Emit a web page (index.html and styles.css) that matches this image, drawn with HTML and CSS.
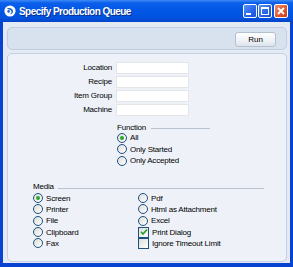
FILE: index.html
```html
<!DOCTYPE html>
<html>
<head>
  <title>Specify Production Queue</title>
  <link rel="stylesheet" href="styles.css">
</head>
<body>
  <div class="window">
    <div class="titlebar">
      <svg class="app-icon" width="12" height="12" viewBox="0 0 12 12">
        <circle cx="6" cy="6" r="5.6" fill="#fff"/>
        <path d="M3 3.5 C5 2.5 8.5 3 9 6 C9.3 8 7.5 9.5 5.5 9.2 C7.5 8.5 8 6.8 7 5.6 C6 4.5 4.5 4.6 3 3.5 Z" fill="#1f5fd0"/>
        <circle cx="4.6" cy="6.4" r="1.3" fill="#1f5fd0"/>
      </svg>
      <span class="title">Specify Production Queue</span>
      <div class="caption-buttons">
        <span class="cbtn"><svg width="14" height="14" viewBox="0 0 14 14"><rect x="3" y="9" width="5" height="2" fill="#fff"/></svg></span>
        <span class="cbtn"><svg width="14" height="14" viewBox="0 0 14 14"><rect x="3.5" y="3.5" width="7" height="7" fill="none" stroke="#fff"/><rect x="3" y="3" width="8" height="2" fill="#fff"/></svg></span>
        <span class="cbtn close"><svg width="14" height="14" viewBox="0 0 14 14"><path d="M4 4 L10 10 M10 4 L4 10" stroke="#fff" stroke-width="1.8"/></svg></span>
      </div>
    </div>

    <div class="client">
      <div class="toolbar">
        <button class="run">Run</button>
      </div>

      <div class="panel">
        <div class="fields">
          <label>Location</label><span class="input"></span>
          <label>Recipe</label><span class="input"></span>
          <label>Item Group</label><span class="input"></span>
          <label>Machine</label><span class="input"></span>
        </div>

        <div class="group function">
          <div class="group-title"><span>Function</span><span class="rule"></span></div>
          <div class="opt"><span class="radio on"></span>All</div>
          <div class="opt"><span class="radio"></span>Only Started</div>
          <div class="opt"><span class="radio"></span>Only Accepted</div>
        </div>

        <div class="group media">
          <div class="group-title"><span>Media</span><span class="rule"></span></div>
          <div class="cols">
            <div class="col">
              <div class="opt"><span class="radio on"></span>Screen</div>
              <div class="opt"><span class="radio"></span>Printer</div>
              <div class="opt"><span class="radio"></span>File</div>
              <div class="opt"><span class="radio"></span>Clipboard</div>
              <div class="opt"><span class="radio"></span>Fax</div>
            </div>
            <div class="col">
              <div class="opt"><span class="radio"></span>Pdf</div>
              <div class="opt"><span class="radio"></span>Html as Attachment</div>
              <div class="opt"><span class="radio"></span>Excel</div>
              <div class="opt"><span class="check on"><svg width="8" height="8" viewBox="0 0 8 8"><path d="M1 3.8 L3 6 L7 1.5" fill="none" stroke="#21a121" stroke-width="1.6"/></svg></span>Print Dialog</div>
              <div class="opt"><span class="check"></span>Ignore Timeout Limit</div>
            </div>
          </div>
        </div>
      </div>
    </div>
  </div>
</body>
</html>
```

FILE: styles.css
```css
body {
  margin: 0;
  font-family: "Liberation Sans", Arial, sans-serif;
  font-size: 8px;
  letter-spacing: -0.2px;
  color: #000;
}

.window {
  width: 293px;
  height: 267px;
  display: flex;
  flex-direction: column;
  background: #0842d0;
  box-sizing: border-box;
  padding: 0 3px 4px;
}

/* Title bar */
.titlebar {
  height: 22px;
  margin: 0 -3px;
  padding: 0 5px 0 4px;
  display: flex;
  align-items: center;
  background: linear-gradient(#3d8af7 0, #0b5fea 3px, #0157e6 45%, #0153df 80%, #0044c8 100%);
}

.app-icon {
  margin-right: 3px;
}

.title {
  flex: 1;
  color: #fff;
  font-weight: bold;
  font-size: 10px;
  letter-spacing: -0.55px;
  text-shadow: 1px 1px 0 #0a2d8a;
}

.caption-buttons {
  display: flex;
  gap: 1px;
}

.cbtn {
  width: 14px;
  height: 14px;
  box-sizing: border-box;
  border: 1px solid #fff;
  border-radius: 2px;
  display: flex;
  align-items: center;
  justify-content: center;
  background: linear-gradient(135deg, #5a93f7, #2663e8 60%, #1a4fd0);
}

.cbtn svg {
  margin: -1px;
}

.cbtn.close {
  margin-left: 1px;
  background: linear-gradient(135deg, #f08e6a, #e0532e 60%, #c8401c);
}

/* Client area */
.client {
  flex: 1;
  display: flex;
  flex-direction: column;
  gap: 3px;
  background: #e4eaf4;
  padding: 5px 3px 1px 4px;
}

.toolbar {
  height: 23px;
  box-sizing: border-box;
  border: 1px solid #c0cde2;
  border-radius: 5px;
  background: #d8e1ee;
  display: flex;
  justify-content: flex-end;
  align-items: flex-start;
  padding: 4px 10px 0 0;
}

.run {
  width: 41px;
  height: 15px;
  border: 1px solid #b4bfd0;
  border-radius: 3px;
  background: linear-gradient(#ffffff, #eef1f6 60%, #dde3ec);
  font-family: "Liberation Sans", Arial, sans-serif;
  font-size: 8px;
  padding: 0;
  color: #000;
}

.panel {
  flex: 1;
  border: 1px solid #c3cfe3;
  border-radius: 5px;
  background: #eef2f8;
  padding-top: 8px;
}

/* Fields */
.fields {
  display: grid;
  grid-template-columns: 104px 73px;
  grid-auto-rows: 12px;
  column-gap: 4px;
  row-gap: 2px;
}

.fields label {
  text-align: right;
  line-height: 12px;
}

.input {
  background: #fff;
  border: 1px solid #e2e5ea;
  box-sizing: border-box;
}

/* Groups */
.group-title {
  display: flex;
  align-items: center;
  height: 10px;
}

.rule {
  height: 1px;
  background: #b9c2cf;
  margin-top: 3px;
}

.function {
  padding-left: 109px;
  margin-top: 6px;
}

.function .rule {
  width: 59px;
  margin-left: 5px;
}

.function .opt {
  height: 11.5px;
}

.media {
  padding-left: 25px;
  margin-top: 15px;
}

.media .rule {
  width: 206px;
  margin-left: 4px;
}

.cols {
  display: flex;
  margin-top: 1px;
}

.col {
  width: 105px;
}

.media .opt {
  height: 11.3px;
}

.opt {
  display: flex;
  align-items: center;
  white-space: nowrap;
}

.radio,
.check {
  width: 10px;
  height: 10px;
  box-sizing: border-box;
  border: 1px solid #1c5180;
  margin-right: 3px;
  display: flex;
  align-items: center;
  justify-content: center;
  background: linear-gradient(135deg, #dcdcd7, #fff);
}

.radio {
  border-radius: 50%;
}

.radio.on::after {
  content: "";
  width: 4px;
  height: 4px;
  border-radius: 50%;
  background: #2ba82b;
}

.check {
  width: 11px;
  height: 11px;
}
```
